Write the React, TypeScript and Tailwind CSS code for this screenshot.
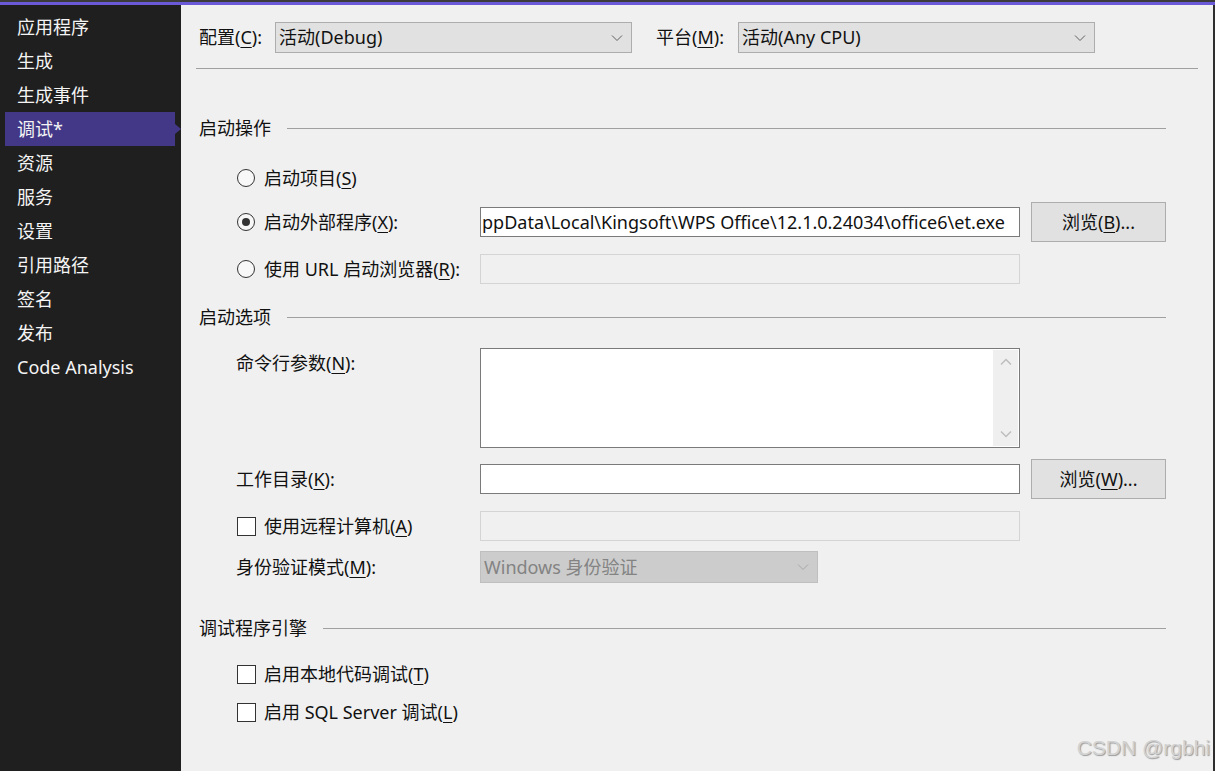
import React from "react";

const FONT = { fontFamily: '"Noto Sans", "Noto Sans CJK SC", sans-serif' };

function U({ c }: { c: string }) {
  return <span className="underline underline-offset-[3px] decoration-1">{c}</span>;
}

function Chevron({ color = "#606060" }: { color?: string }) {
  return (
    <svg width="12" height="8" viewBox="0 0 12 8" fill="none">
      <path d="M1 1.5 L6 6.5 L11 1.5" stroke={color} strokeWidth="1" />
    </svg>
  );
}

function Select({ text, width }: { text: string; width: string }) {
  return (
    <div
      className={`flex h-[31px] items-center justify-between border border-[#adadad] bg-[#e1e1e1] pl-[3px] pr-[8px] ${width}`}
    >
      <span>{text}</span>
      <Chevron />
    </div>
  );
}

function Radio({ checked }: { checked?: boolean }) {
  return (
    <div className="flex h-[18px] w-[18px] items-center justify-center rounded-full border border-[#333] bg-[#f8f8f8]">
      {checked && <div className="h-[8px] w-[8px] rounded-full bg-[#333]" />}
    </div>
  );
}

function Check() {
  return <div className="h-[19px] w-[19px] border border-[#333] bg-white" />;
}

function Section({ title }: { title: string }) {
  return (
    <div className="flex h-[24px] items-center pl-[3px]">
      <span className="leading-none">{title}</span>
      <div className="ml-[16px] mr-[32px] h-px flex-1 bg-[#a0a0a0]" />
    </div>
  );
}

function Button({ children }: { children: React.ReactNode }) {
  return (
    <div className="flex h-[40px] w-[135px] items-center justify-center border border-[#adadad] bg-[#e1e1e1]">
      {children}
    </div>
  );
}

const navItems = [
  "应用程序",
  "生成",
  "生成事件",
  "调试*",
  "资源",
  "服务",
  "设置",
  "引用路径",
  "签名",
  "发布",
  "Code Analysis",
];

export default function App() {
  return (
    <div className="relative h-[771px] w-[1215px] overflow-hidden bg-[#f0f0f0] text-[18px] text-[#111]" style={FONT}>
      <div className="h-[2px] bg-[#3b3b3b]" />
      <div className="h-[3px] bg-[#6a5ad8]" />
      <div className="flex h-[766px]">
        <div className="relative w-[181px] bg-[#1f1f1f] pt-[5px] text-[#f4f4f4]">
          {navItems.map((t) => (
            <div
              key={t}
              className={`relative ml-[5px] flex h-[34px] w-[170px] items-center pl-[12px] ${
                t === "调试*" ? "bg-[#433887]" : ""
              }`}
            >
              {t}
              {t === "调试*" && (
                <div className="absolute right-[-6px] top-[12px] h-0 w-0 border-y-[5px] border-l-[6px] border-y-transparent border-l-[#433887]" />
              )}
            </div>
          ))}
        </div>
        <div className="flex flex-1 flex-col pl-[15px] pr-[15px]">
          <div className="mt-[17px] flex h-[31px] items-center">
            <span className="ml-[3px] w-[76px]">
              配置(<U c="C" />):
            </span>
            <Select text="活动(Debug)" width="w-[357px]" />
            <span className="ml-[24px] w-[82px]">
              平台(<U c="M" />):
            </span>
            <Select text="活动(Any CPU)" width="w-[357px]" />
          </div>
          <div className="mt-[15px] h-px bg-[#a0a0a0]" />

          <div className="mt-[47px]">
            <Section title="启动操作" />
          </div>

          <div className="ml-[41px] mt-[26px] flex h-[24px] items-center">
            <Radio />
            <span className="ml-[9px]">
              启动项目(<U c="S" />)
            </span>
          </div>

          <div className="ml-[41px] mt-[12px] flex h-[40px] items-center">
            <div className="flex w-[243px] items-center">
              <Radio checked />
              <span className="ml-[9px]">
                启动外部程序(<U c="X" />):
              </span>
            </div>
            <div className="flex h-[30px] w-[540px] items-center overflow-hidden border border-[#7a7a7a] bg-white pl-[1px]">
              <span className="whitespace-nowrap">ppData\Local\Kingsoft\WPS Office\12.1.0.24034\office6\et.exe</span>
            </div>
            <div className="ml-[11px]">
              <Button>
                浏览(<U c="B" />)...
              </Button>
            </div>
          </div>

          <div className="ml-[41px] mt-[12px] flex h-[30px] items-center">
            <div className="flex w-[243px] items-center">
              <Radio />
              <span className="ml-[9px] whitespace-nowrap">
                使用 URL 启动浏览器(<U c="R" />):
              </span>
            </div>
            <div className="h-[30px] w-[540px] border border-[#d4d4d4] bg-[#f0f0f0]" />
          </div>

          <div className="mt-[21px]">
            <Section title="启动选项" />
          </div>

          <div className="ml-[40px] mt-[19px] flex h-[100px] items-start">
            <span className="mt-[2px] w-[244px]">
              命令行参数(<U c="N" />):
            </span>
            <div className="flex h-[100px] w-[540px] border border-[#7a7a7a] bg-white">
              <div className="flex-1" />
              <div className="my-[1px] mr-[1px] flex w-[25px] flex-col items-center justify-between bg-[#efefef] py-[8px]">
                <svg width="12" height="8" viewBox="0 0 12 8" fill="none">
                  <path d="M1 6.5 L6 1.5 L11 6.5" stroke="#bdbdbd" strokeWidth="1.5" />
                </svg>
                <svg width="12" height="8" viewBox="0 0 12 8" fill="none">
                  <path d="M1 1.5 L6 6.5 L11 1.5" stroke="#bdbdbd" strokeWidth="1.5" />
                </svg>
              </div>
            </div>
          </div>

          <div className="ml-[40px] mt-[11px] flex h-[40px] items-center">
            <span className="w-[244px]">
              工作目录(<U c="K" />):
            </span>
            <div className="h-[30px] w-[540px] border border-[#7a7a7a] bg-white" />
            <div className="ml-[11px]">
              <Button>
                浏览(<U c="W" />)...
              </Button>
            </div>
          </div>

          <div className="ml-[41px] mt-[12px] flex h-[30px] items-center">
            <div className="flex w-[243px] items-center">
              <Check />
              <span className="ml-[8px]">
                使用远程计算机(<U c="A" />)
              </span>
            </div>
            <div className="h-[30px] w-[540px] border border-[#d4d4d4] bg-[#f0f0f0]" />
          </div>

          <div className="ml-[40px] mt-[10px] flex h-[32px] items-center">
            <span className="w-[244px]">
              身份验证模式(<U c="M" />):
            </span>
            <div className="flex h-[32px] w-[338px] items-center justify-between border border-[#bfbfbf] bg-[#cccccc] pl-[3px] pr-[8px] text-[#838383]">
              <span>Windows 身份验证</span>
              <Chevron color="#a8a8a8" />
            </div>
          </div>

          <div className="mt-[33px]">
            <Section title="调试程序引擎" />
          </div>

          <div className="ml-[41px] mt-[22px] flex h-[24px] items-center">
            <Check />
            <span className="ml-[8px]">
              启用本地代码调试(<U c="T" />)
            </span>
          </div>
          <div className="ml-[41px] mt-[14px] flex h-[24px] items-center">
            <Check />
            <span className="ml-[8px]">
              启用 SQL Server 调试(<U c="L" />)
            </span>
          </div>
        </div>
        <div className="w-[2px] bg-[#2e2e2e]" />
      </div>
      <div
        className="absolute bottom-[8px] right-[5px] text-[21px] text-[#d2d2d2]"
        style={{ fontFamily: '"Liberation Sans", Arial, sans-serif', textShadow: "1px 1px 1px #9a9a9a" }}
      >
        CSDN @rgbhi
      </div>
    </div>
  );
}
